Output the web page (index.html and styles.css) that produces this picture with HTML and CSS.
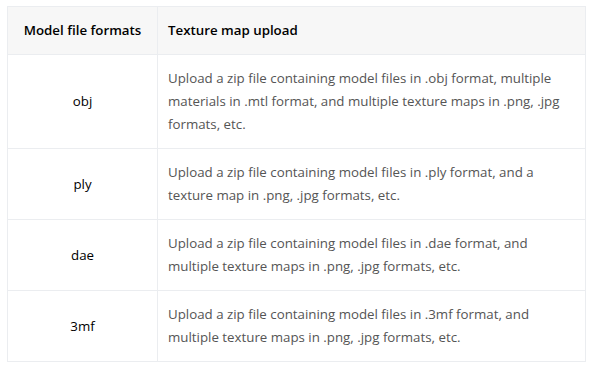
FILE: index.html
```html
<!DOCTYPE html>
<html>
<head>
<meta charset="utf-8">
<link rel="stylesheet" href="styles.css">
</head>
<body>
<table class="fmt">
  <thead>
    <tr><th class="c1">Model file formats</th><th class="c2">Texture map upload</th></tr>
  </thead>
  <tbody>
    <tr><td class="c1">obj</td><td class="c2">Upload a zip file containing model files in .obj format, multiple materials in .mtl format, and multiple texture maps in .png, .jpg formats, etc.</td></tr>
    <tr><td class="c1">ply</td><td class="c2">Upload a zip file containing model files in .ply format, and a texture map in .png, .jpg formats, etc.</td></tr>
    <tr><td class="c1">dae</td><td class="c2">Upload a zip file containing model files in .dae format, and multiple texture maps in .png, .jpg formats, etc.</td></tr>
    <tr><td class="c1">3mf</td><td class="c2">Upload a zip file containing model files in .3mf format, and multiple texture maps in .png, .jpg formats, etc.</td></tr>
  </tbody>
</table>
</body>
</html>
```
FILE: styles.css
```css
html, body { margin: 0; padding: 0; background: #fff; }
body { padding: 6px 0 0 7px; font-family: "Open Sans", "Segoe UI", sans-serif; font-size: 13.3px; }
.fmt { border-collapse: collapse; width: 579px; table-layout: fixed; }
.fmt th, .fmt td { border: 1px solid #ebedf0; padding: 12px 10px 12px 10px; line-height: 23px; vertical-align: middle; }
.fmt th { background: #f7f7f7; font-weight: 600; color: #000; text-align: left; }
.fmt .c1 { width: 150px; text-align: center; color: #000; box-sizing: border-box; }
.fmt td.c2 { color: #555; }
.fmt th.c2 { text-align: left; }
```
